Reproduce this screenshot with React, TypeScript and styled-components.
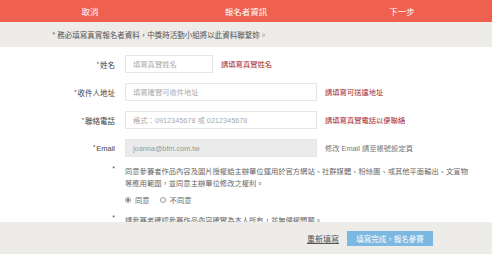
import React from "react";
import styled, { createGlobalStyle } from "styled-components";

const GlobalStyle = createGlobalStyle`
  body {
    margin: 0;
    background: #fff;
    font-family: "Liberation Sans", "Noto Sans CJK TC", Arial, sans-serif;
    color: #555;
  }
`;

const Page = styled.div`
  width: 492px;
  height: 254px;
  overflow: hidden;
  position: relative;
`;

const TopBar = styled.div`
  height: 22px;
  background: #f0604f;
  display: grid;
  grid-template-columns: 1fr 1fr 1fr;
  align-items: center;
  padding: 0 12px;
  color: #fff;
  font-size: 8.5px;
  font-family: "Noto Sans CJK TC", sans-serif;
`;

const TopItem = styled.div`
  text-align: center;
`;

const Notice = styled.div`
  height: 25px;
  background: #edece8;
  display: flex;
  align-items: center;
  padding-left: 52px;
  font-size: 7.5px;
  color: #555;
  font-family: "Noto Sans CJK TC", sans-serif;
`;

const Form = styled.div`
  padding-top: 8px;
  display: flex;
  flex-direction: column;
  gap: 10px;
`;

const FieldRow = styled.div`
  display: flex;
  align-items: center;
  height: 18px;
`;

const Label = styled.label`
  width: 115px;
  padding-right: 10px;
  text-align: right;
  font-size: 7.5px;
  color: #444;
  font-family: "Liberation Sans", "Noto Sans CJK TC", sans-serif;
`;

const Star = styled.sup`
  font-size: 6px;
  margin-right: 1px;
  vertical-align: 2px;
`;

const Input = styled.input<{ wide?: boolean; disabled?: boolean }>`
  box-sizing: border-box;
  width: ${({ wide }) => (wide ? "192px" : "88px")};
  height: 18px;
  border: 1px solid #e8e6e3;
  background: ${({ disabled }) => (disabled ? "#ebebeb" : "#fff")};
  padding: 0 7px;
  font-size: 7.3px;
  color: #999;
  font-family: "Liberation Sans", "Noto Sans CJK TC", sans-serif;
  outline: none;
  &::placeholder {
    color: #aaa;
  }
`;

const Hint = styled.span<{ error?: boolean }>`
  margin-left: 8px;
  font-size: 7.3px;
  color: ${({ error }) => (error ? "#a6262d" : "#777")};
  font-family: "Liberation Sans", "Noto Sans CJK TC", sans-serif;
`;

const Agreement = styled.div`
  display: flex;
  margin-top: 8px;
`;

const Bullet = styled.div`
  width: 125px;
  padding-right: 10px;
  box-sizing: border-box;
  text-align: right;
  font-size: 7px;
  color: #555;
`;

const AgreeBody = styled.div`
  width: 345px;
  font-size: 7.3px;
  line-height: 12px;
  color: #666;
  font-family: "Noto Sans CJK TC", sans-serif;
`;

const RadioRow = styled.div`
  display: flex;
  align-items: center;
  gap: 10px;
  margin-top: 5px;
`;

const RadioOption = styled.span`
  display: flex;
  align-items: center;
  gap: 4px;
`;

const RadioDot = styled.span<{ checked?: boolean }>`
  box-sizing: border-box;
  width: 6px;
  height: 6px;
  border-radius: 50%;
  border: 1px solid #999;
  background: ${({ checked }) => (checked ? "radial-gradient(circle, #555 0 1.4px, #fff 1.6px)" : "#fff")};
`;

const BottomBar = styled.div`
  position: absolute;
  left: 0;
  right: 0;
  bottom: 0;
  height: 32px;
  background: #edece8;
  display: flex;
  align-items: center;
  justify-content: flex-end;
  gap: 8px;
  padding-right: 59px;
  font-family: "Noto Sans CJK TC", sans-serif;
`;

const ResetLink = styled.a`
  font-size: 8px;
  color: #555;
  text-decoration: underline;
`;

const SubmitButton = styled.button`
  width: 86px;
  height: 15px;
  border: none;
  background: #7cb9e2;
  color: #fff;
  font-size: 7.5px;
  font-family: "Noto Sans CJK TC", sans-serif;
  padding: 0;
`;

export default function App() {
  return (
    <Page>
      <GlobalStyle />
      <TopBar>
        <TopItem>取消</TopItem>
        <TopItem>報名者資訊</TopItem>
        <TopItem>下一步</TopItem>
      </TopBar>
      <Notice>* 務必填寫真實報名者資料，中獎時活動小組將以此資料聯繫妳。</Notice>
      <Form>
        <FieldRow>
          <Label>
            <Star>*</Star>姓名
          </Label>
          <Input placeholder="填寫真實姓名" />
          <Hint error>請填寫真實姓名</Hint>
        </FieldRow>
        <FieldRow>
          <Label>
            <Star>*</Star>收件人地址
          </Label>
          <Input wide placeholder="填寫確實可收件地址" />
          <Hint error>請填寫可送達地址</Hint>
        </FieldRow>
        <FieldRow>
          <Label>
            <Star>*</Star>聯絡電話
          </Label>
          <Input wide placeholder="格式：0912345678 或 0212345678" />
          <Hint error>請填寫真實電話以便聯絡</Hint>
        </FieldRow>
        <FieldRow>
          <Label>
            <Star>*</Star>Email
          </Label>
          <Input wide disabled value="joanna@bfm.com.tw" readOnly />
          <Hint>修改 Email 請至帳號設定頁</Hint>
        </FieldRow>
      </Form>
      <Agreement>
        <Bullet>*</Bullet>
        <AgreeBody>
          同意參賽者作品內容及圖片授權給主辦單位運用於官方網站、社群媒體、粉絲團、或其他平面輸出、文宣物等應用範圍，並同意主辦單位修改之權利。
          <RadioRow>
            <RadioOption>
              <RadioDot checked />
              同意
            </RadioOption>
            <RadioOption>
              <RadioDot />
              不同意
            </RadioOption>
          </RadioRow>
        </AgreeBody>
      </Agreement>
      <Agreement>
        <Bullet>*</Bullet>
        <AgreeBody>請參賽者確認參賽作品內容確實為本人所有，並無侵權問題。</AgreeBody>
      </Agreement>
      <BottomBar>
        <ResetLink>重新填寫</ResetLink>
        <SubmitButton>填寫完成，報名參賽</SubmitButton>
      </BottomBar>
    </Page>
  );
}
